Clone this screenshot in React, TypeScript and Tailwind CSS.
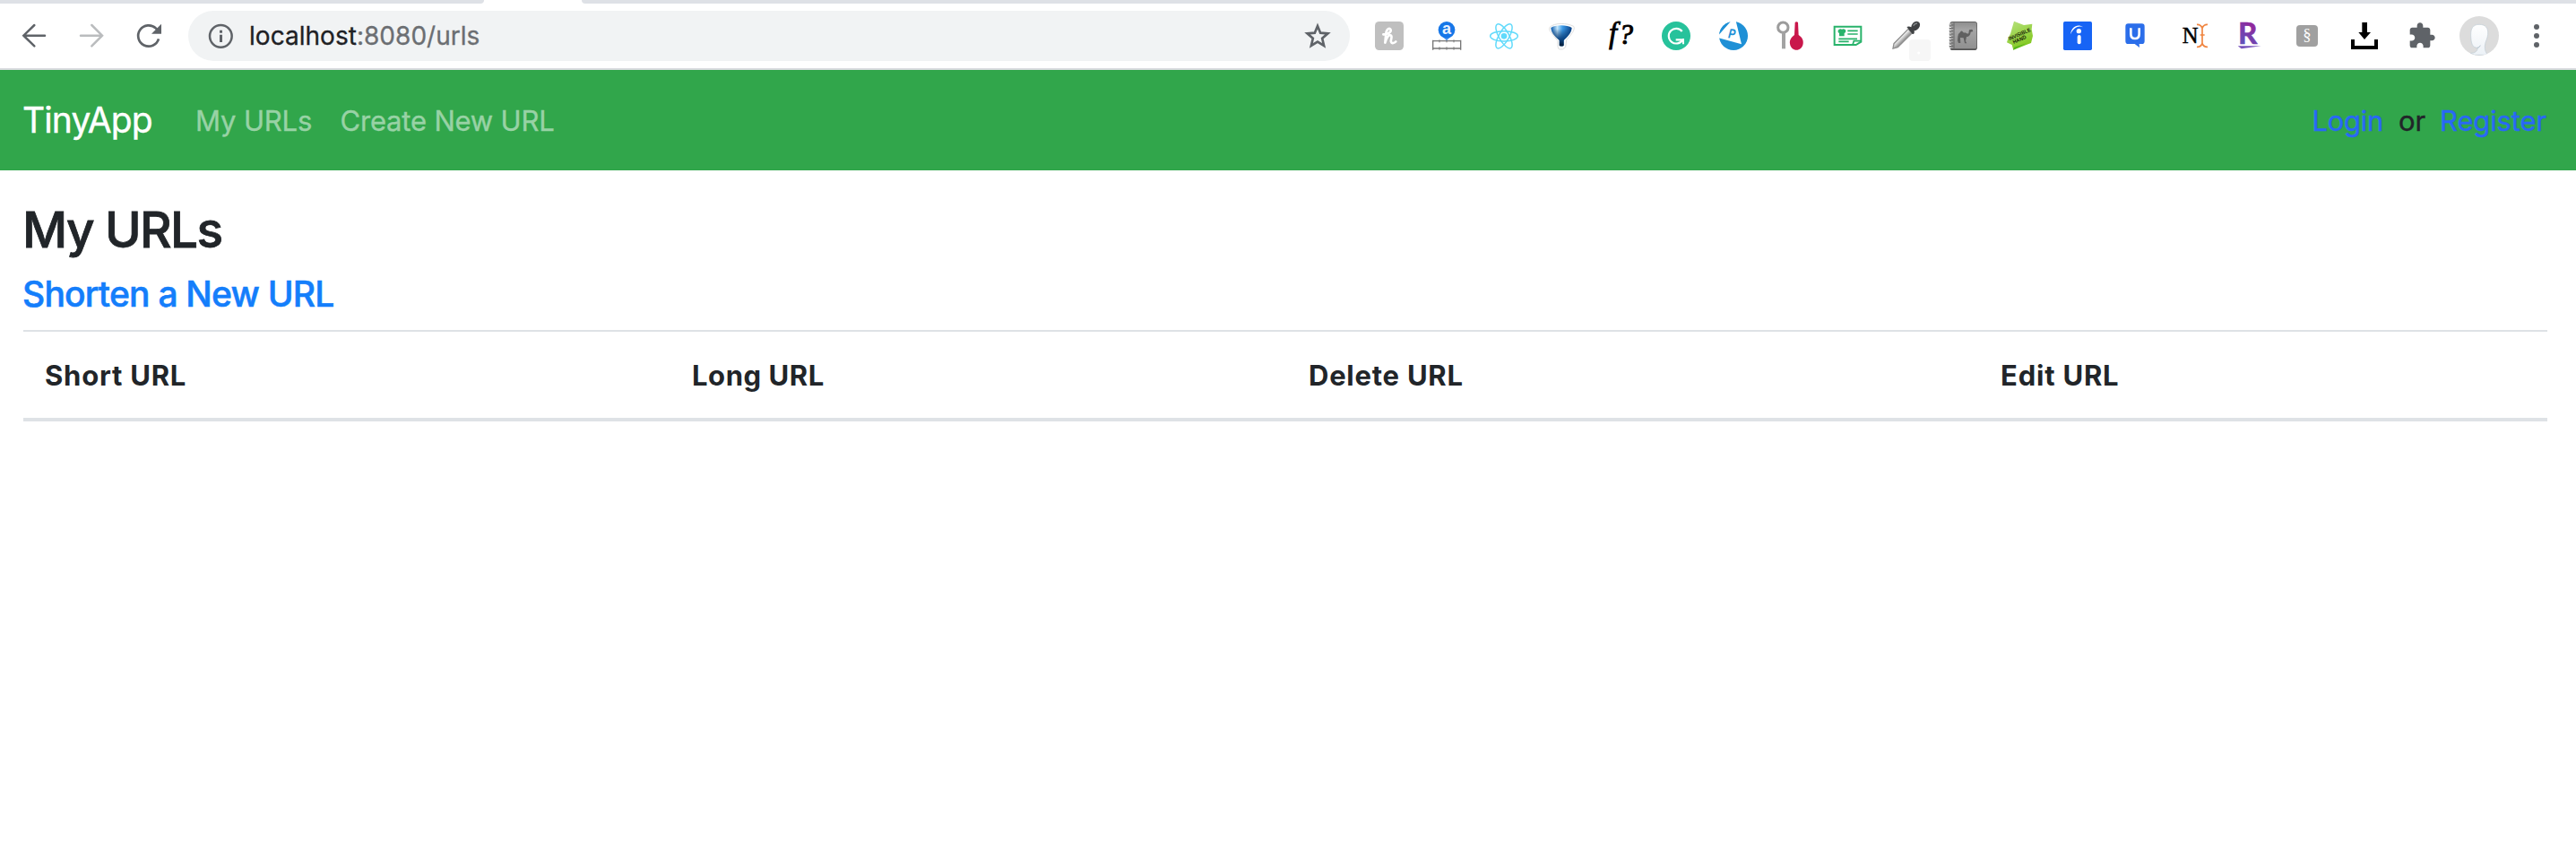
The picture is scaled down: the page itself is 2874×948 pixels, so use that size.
import type { ReactNode } from "react";

function Icon({ label, children }: { label: string; children: ReactNode }) {
  return (
    <svg viewBox="-96 -96 192 192" aria-label={label} role="img" className="h-16 w-16 shrink-0" fill="none">
      {children}
    </svg>
  );
}

function NavigationIcons() {
  return (
    <div className="flex w-[204px] shrink-0 items-center">
      <Icon label="Back">
        <path d="M1 -36 L-35 -1 L1 34 M-35 -1 H36" stroke="#5f6368" strokeWidth="7.5" strokeLinecap="round" />
      </Icon>
      <Icon label="Forward">
        <path d="M1 -36 L36 -1 L1 34 M36 -1 H-36" stroke="#babcbe" strokeWidth="7.5" strokeLinecap="round" />
      </Icon>
      <Icon label="Reload">
        <path d="M33 10 A35 35 0 1 1 24 -25 L29 -20" stroke="#5f6368" strokeWidth="8" />
        <path d="M42 -40 V-7 H9 Z" fill="#5f6368" />
      </Icon>
    </div>
  );
}

function AddressBar() {
  return (
    <div className="flex h-14 w-[1296px] shrink-0 items-center rounded-full bg-[#f1f3f4] pl-1 pr-1">
      <Icon label="Site information">
        <circle cx="1" cy="1" r="37" stroke="#5f6368" strokeWidth="7.5" />
        <path d="M-3 -19 H6 V-10 H-3 Z M-3 -4 H6 V21 H-3 Z" fill="#5f6368" />
      </Icon>
      <span className="flex-1 whitespace-pre text-[28px] leading-[56px] tracking-[0.03px] text-[#6b6e72] [-webkit-text-stroke:0.3px_currentColor]">
        <span className="text-[#202124]">localhost</span>:8080/urls
      </span>
      <Icon label="Bookmark this tab">
        <path
          d="M0 -33 L9.5 -10 L34.5 -8 L15.5 8.5 L21.3 33 L0 20 L-21.3 33 L-15.5 8.5 L-34.5 -8 L-9.5 -10 Z"
          stroke="#5f6368"
          strokeWidth="8"
        />
      </Icon>
    </div>
  );
}

function ExtensionIcons() {
  return (
    <div className="flex items-center pl-3">
      <Icon label="Honey">
        <rect x="-48" y="-48" width="96" height="96" rx="14" fill="#bfbfbf" />
        <path
          d="M-20 -5 C-8 -4 7 -12 5 -20 C2 -29 -10 -23 -11 -8 L-14 23 C-10 6 -1 -5 5 -2 C12 2 3 14 6 20 C9 27 17 24 22 19"
          stroke="#fff"
          strokeWidth="8"
          strokeLinecap="round"
          strokeLinejoin="round"
        />
      </Icon>
      <Icon label="Keyword ruler">
        <path d="M-46 14 V47 M47 14 V47 M-48 17 H48 M-46 42 H47" stroke="#777" strokeWidth="4" />
        <path d="M-24 13 V22 M0 13 V22 M24 13 V22 M-24 37 V47 M0 37 V47 M24 37 V47" stroke="#777" strokeWidth="3" />
        <path d="M-12 4 L0 16 L12 4 Z" fill="#4a96f0" />
        <circle cx="0" cy="-20" r="28" fill="#1677e8" />
        <text x="0" y="-6" textAnchor="middle" fill="#e9f3ff" fontSize="54" fontWeight="700" fontFamily="Liberation Sans, sans-serif">a</text>
      </Icon>
      <Icon label="React developer tools">
        <g stroke="#61dafb" strokeWidth="4.5" transform="translate(0 1)">
          <ellipse rx="46" ry="17" />
          <ellipse rx="46" ry="17" transform="rotate(60)" />
          <ellipse rx="46" ry="17" transform="rotate(120)" />
        </g>
        <circle cx="0" cy="1" r="10" fill="#61dafb" />
      </Icon>
      <Icon label="Filter">
        <defs>
          <linearGradient id="funnel" x1="-34" x2="34" y1="0" y2="0" gradientUnits="userSpaceOnUse">
            <stop offset="0" stopColor="#0c5db0" />
            <stop offset="0.3" stopColor="#c4e6fb" />
            <stop offset="0.55" stopColor="#3d9be8" />
            <stop offset="1" stopColor="#0a4288" />
          </linearGradient>
          <linearGradient id="funnelShade" x1="0" x2="0" y1="-30" y2="34" gradientUnits="userSpaceOnUse">
            <stop offset="0.1" stopColor="#08305f" stopOpacity="0" />
            <stop offset="0.6" stopColor="#08407f" stopOpacity="0.9" />
            <stop offset="1" stopColor="#051a33" />
          </linearGradient>
        </defs>
        <path d="M-38 -30 C-22 -44 18 -44 41 -32 C48 -22 34 -6 17 14 L14 38 Q6 48 -7 45 Q-14 42 -12 17 L-38 -16 Q-43 -24 -38 -30Z" fill="#fff" stroke="#dedede" strokeWidth="3" />
        <path d="M-35 -27 C-22 -38 20 -38 35 -27 C34 -8 16 6 8 15 V32 Q0 37 -7 32 V15 C-16 6 -34 -8 -35 -27Z" fill="url(#funnel)" />
        <path d="M-35 -27 C-22 -38 20 -38 35 -27 C34 -8 16 6 8 15 V32 Q0 37 -7 32 V15 C-16 6 -34 -8 -35 -27Z" fill="url(#funnelShade)" />
      </Icon>
      <Icon label="Font inspector">
        <text x="-33" y="23" fill="#000" stroke="#000" strokeWidth="2.5" fontSize="98" fontStyle="italic" fontFamily="Liberation Serif, serif">f</text>
        <text x="1" y="27" fill="#000" stroke="#000" strokeWidth="3" fontSize="94" fontStyle="italic" fontFamily="Liberation Serif, serif">?</text>
      </Icon>
      <Icon label="Grammarly">
        <circle r="48" fill="#27c29b" />
        <path d="M20 -15 A25 25 0 1 0 22 13 M-1 13 H24" stroke="#fff" strokeWidth="6.5" />
        <path d="M24 9 V28" stroke="#fff" strokeWidth="6" />
      </Icon>
      <Icon label="Price comparison">
        <circle r="48" fill="#1f90d6" />
        <path d="M-8 -50 L8 -50 L27 28 L-50 7 L-50 -2 Z" fill="#fff" />
        <path d="M-12 -46.5 A48 48 0 0 0 -47 -8 Z" fill="#1f90d6" />
        <text x="-18" y="9" fill="#1f90d6" fontSize="45" fontWeight="700" fontStyle="italic" fontFamily="Liberation Sans, sans-serif" textLength="24" lengthAdjust="spacingAndGlyphs" transform="rotate(6)">P</text>
      </Icon>
      <Icon label="Keys">
        <circle cx="-26" cy="-28" r="17" stroke="#9c9c9c" strokeWidth="9" />
        <path d="M-24 -13 V43" stroke="#a3a3a3" strokeWidth="12" />
        <path d="M14 -45 Q19 -50 24 -45 L26 -3 C37 4 43 14 41 26 C37 54 1 54 -3 26 C-5 14 2 4 12 -3 Z" fill="#c9174b" />
      </Icon>
      <Icon label="Recipe card">
        <path d="M-46 -31 H43 V20 L26 30 H-46 Z" stroke="#29b36b" strokeWidth="6" />
        <path d="M-34 -19 Q-26 -26 -21 -22 Q-15 -26 -8 -19 Q-7 -11 -13 -9 V1 H-30 V-9 Q-36 -12 -34 -19Z" fill="#29b36b" />
        <path d="M-2 -17 H32 M-2 -6 H32 M-32 10 H30 M-32 19 H2" stroke="#29b36b" strokeWidth="5" />
        <path d="M15 30 L19 17 L44 17" stroke="#29b36b" strokeWidth="5" />
      </Icon>
      <Icon label="Eye dropper">
        <defs>
          <linearGradient id="glass" x1="-28" y1="0" x2="-10" y2="18" gradientUnits="userSpaceOnUse">
            <stop offset="0" stopColor="#8a8a8a" />
            <stop offset="0.45" stopColor="#fafafa" />
            <stop offset="1" stopColor="#999" />
          </linearGradient>
        </defs>
        <path d="M9 -23 L22 -10 L-26 38 L-42 42 L-39 26 Z" fill="url(#glass)" stroke="#8f8f8f" strokeWidth="4" />
        <path d="M4 -30 Q12 -34 19 -29 Q22 -49 38 -49 Q52 -46 47 -31 Q40 -18 29 -17 Q31 -4 23 -6 Z" fill="#404244" />
        <path d="M26 -34 Q31 -42 39 -42" stroke="#85898b" strokeWidth="5" />
        <rect x="12" y="12" width="72" height="72" rx="11" fill="#f6f6f6" />
        <circle cx="44" cy="57" r="4.5" fill="#fff" />
      </Icon>
      <Icon label="Price tracker">
        <defs>
          <linearGradient id="notebook" x1="0" x2="0" y1="-48" y2="48" gradientUnits="userSpaceOnUse">
            <stop offset="0" stopColor="#8c8c8c" />
            <stop offset="0.3" stopColor="#a5a5a5" />
            <stop offset="1" stopColor="#8e8e8e" />
          </linearGradient>
        </defs>
        <rect x="-44" y="-48" width="92" height="96" rx="10" fill="#555" />
        <rect x="-42" y="-46" width="88" height="89" rx="8" fill="url(#notebook)" />
        <path d="M-30 -44 V44" stroke="#696969" strokeWidth="3" />
        <path d="M-43 -40 V42" stroke="#fff" strokeWidth="8" strokeDasharray="5 5" />
        <path d="M-46 -36 H-32 M-46 -26 H-32 M-46 -16 H-32 M-46 -6 H-32 M-46 4 H-32 M-46 14 H-32 M-46 24 H-32 M-46 34 H-32" stroke="#5f5f5f" strokeWidth="3" />
        <path d="M-18 16 L-17 2 Q-17 -7 -10 -11 Q-5 -21 0 -13 Q4 -9 8 -11 Q14 -6 19 -8 L21 -20 L31 -22 L34 -15 L26 -13 Q25 2 12 3 L9 18 L13 25 H6 L2 7 L-9 6 L-8 24 H-15 Z" fill="#606060" />
      </Icon>
      <Icon label="Invisible Hand">
        <defs>
          <linearGradient id="tag" x1="-30" x2="20" y1="-48" y2="48" gradientUnits="userSpaceOnUse">
            <stop offset="0" stopColor="#b5e07a" />
            <stop offset="1" stopColor="#7cc514" />
          </linearGradient>
        </defs>
        <path d="M-21 -49 L12 -36 L40 -40 L38 -22 L42 0 L36 24 L22 29 L-23 47 L-28 30 L-45 22 L-40 6 L-33 -7 Z" fill="url(#tag)" />
        <path d="M22 25 L-24 47 L-20 38 Z" fill="#52b51d" />
        <g transform="rotate(-24)" fill="#172107" fontFamily="Liberation Sans, sans-serif" fontWeight="700" fontSize="18">
          <text x="-39" y="0" textLength="78" lengthAdjust="spacingAndGlyphs">INVISIBLE</text>
          <text x="-31" y="16" textLength="47" lengthAdjust="spacingAndGlyphs">HAND</text>
        </g>
      </Icon>
      <Icon label="Indeed">
        <rect x="-48" y="-48" width="96" height="96" rx="5" fill="#1764f5" />
        <circle cx="4" cy="-16" r="8" fill="#fff" />
        <path d="M5 3 V22" stroke="#fff" strokeWidth="12" strokeLinecap="round" />
        <path d="M-24 -5 C-21 -32 2 -42 18 -29 C2 -36 -14 -26 -24 -5Z" fill="#fff" />
      </Icon>
      <Icon label="Chat">
        <path d="M-23 -41 H23 Q32 -41 32 -31 V17 Q32 27 23 27 H14 L15 39 L-1 27 H-23 Q-32 27 -32 17 V-31 Q-32 -41 -23 -41Z" fill="#2b6eea" />
        <path d="M-14 -26 V-6 Q-14 9 0 9 Q14 9 14 -6 V-26" stroke="#fff" strokeWidth="8" />
      </Icon>
      <Icon label="Text cursor">
        <text x="-34" y="24" fill="#000" stroke="#000" strokeWidth="1.5" fontSize="74" fontFamily="Liberation Serif, serif">N</text>
        <path d="M16 -38 Q29 -39 34 -26 Q39 -39 52 -38 M34 -27 V27 M16 37 Q29 38 34 25 Q39 38 52 37 M27 -3 H42" transform="translate(-1 0)" stroke="#f08540" strokeWidth="5" />
      </Icon>
      <Icon label="Rakuten">
        <defs>
          <linearGradient id="rakuten" x1="-25" x2="25" y1="20" y2="-40" gradientUnits="userSpaceOnUse">
            <stop offset="0" stopColor="#6350b8" />
            <stop offset="1" stopColor="#982097" />
          </linearGradient>
        </defs>
        <text x="-39" y="26" fill="url(#rakuten)" stroke="url(#rakuten)" strokeWidth="2" fontSize="96" fontWeight="700" fontFamily="Lato, sans-serif" textLength="64" lengthAdjust="spacingAndGlyphs">R</text>
        <path d="M-40 34 H38 L-28 43 Z" fill="#7651bb" />
      </Icon>
      <Icon label="Section">
        <rect x="-36" y="-36" width="72" height="72" rx="12" fill="#a0a0a0" />
        <text x="0" y="15" textAnchor="middle" fill="#fff" fontSize="56" fontFamily="Liberation Serif, serif">§</text>
      </Icon>
      <Icon label="Downloads">
        <path d="M-8 -45 H9 V-12 H21 L0 12 L-20 -12 H-8 Z" fill="#000" />
        <path d="M-39 12 V39 H39 V12" stroke="#000" strokeWidth="12" />
      </Icon>
      <Icon label="Extensions">
        <path
          transform="translate(-48 -48) scale(4)"
          fill="#5f6368"
          d="M20.5 11H19V7c0-1.1-.9-2-2-2h-4V3.5C13 2.12 11.88 1 10.5 1S8 2.12 8 3.5V5H4c-1.1 0-1.99.9-1.99 2v3.8H3.5c1.49 0 2.7 1.21 2.7 2.7s-1.21 2.7-2.7 2.7H2V20c0 1.1.9 2 2 2h3.8v-1.5c0-1.49 1.21-2.7 2.7-2.7 1.49 0 2.7 1.21 2.7 2.7V22H17c1.1 0 2-.9 2-2v-4h1.5c1.38 0 2.5-1.12 2.5-2.5S21.88 11 20.5 11z"
        />
      </Icon>
      <Icon label="Profile">
        <defs>
          <clipPath id="avatar">
            <circle r="66" />
          </clipPath>
          <linearGradient id="face" x1="0" x2="0" y1="-40" y2="60" gradientUnits="userSpaceOnUse">
            <stop offset="0" stopColor="#fff" />
            <stop offset="1" stopColor="#edf2f7" />
          </linearGradient>
        </defs>
        <circle r="66" fill="#dcdcdc" />
        <path clipPath="url(#avatar)" d="M-29 58 C-12 57 -6 51 -5 40 C-23 40 -27 26 -28 0 C-29 -26 -20 -38 0 -38 C20 -38 31 -28 29 -5 C28 10 20 18 19 34 C18 49 23 57 30 64 H-15 Z" fill="url(#face)" stroke="#c0cbd4" strokeWidth="2" />
        <path d="M-6 40 Q0 40 4 32" stroke="#aebdca" strokeWidth="3" />
      </Icon>
      <Icon label="Menu">
        <g fill="#5f6368">
          <circle cy="-30" r="9" />
          <circle r="9" />
          <circle cy="30" r="9" />
        </g>
      </Icon>
    </div>
  );
}

function BrowserChrome() {
  return (
    <header className="h-[78px] border-b-2 border-[#dadce0] bg-white">
      <div className="flex h-1">
        <div className="w-[540px] rounded-br-[4px] bg-[#dee1e6]" />
        <div className="w-[109px]" />
        <div className="flex-1 rounded-bl-[4px] bg-[#dee1e6]" />
      </div>
      <div className="flex h-[72px] items-center pl-[6px]">
        <NavigationIcons />
        <AddressBar />
        <ExtensionIcons />
      </div>
    </header>
  );
}

function Navbar() {
  return (
    <nav className="flex h-28 items-center bg-[#31a64b] pl-[25px] pr-8 text-[31px] leading-[48px] [-webkit-text-stroke:0.4px_currentColor]">
      <a className="w-[193px] text-[39px] tracking-[-0.9px] text-white">TinyApp</a>
      <a className="w-[161.5px] pt-0.5 tracking-[-0.14px] text-[#98d2a5]">My URLs</a>
      <a className="pt-0.5 tracking-[-0.19px] text-[#98d2a5]">Create New URL</a>
      <div className="ml-auto flex pt-0.5 text-[#2868f6]">
        <a className="w-[96.5px] tracking-[-0.28px]">Login</a>
        <span className="w-[46px] text-[#212529]">or</span>
        <a className="w-[120px] tracking-[-0.12px]">Register</a>
      </div>
    </nav>
  );
}

export default function App() {
  return (
    <div className="h-[948px] overflow-hidden bg-white font-['Inter','Liberation_Sans',sans-serif] text-[#212529]">
      <BrowserChrome />
      <Navbar />
      <main className="pl-[26px] pr-8 pt-[33px]">
        <h1 className="-ml-px mb-[15px] text-[55px] font-medium leading-[66px] tracking-[-1.64px] [-webkit-text-stroke:0.8px_currentColor]">My URLs</h1>
        <h2 className="-ml-px mb-4 text-[39px] font-medium leading-[48px] tracking-[-0.78px] text-[#147efb] [-webkit-text-stroke:0.6px_currentColor]">
          <a>Shorten a New URL</a>
        </h2>
        <table className="w-full table-fixed border-collapse text-left text-[31px] leading-[48px]">
          <thead className="border-t-2 border-b-4 border-[#dee2e6]">
            <tr>
              <th className="w-[722px] px-6 pb-[23px] pt-[25px] font-bold tracking-[0.78px]">Short URL</th>
              <th className="w-[688px] px-6 pb-[23px] pt-[25px] font-bold tracking-[0.56px]">Long URL</th>
              <th className="w-[772px] px-6 pb-[23px] pt-[25px] font-bold tracking-[0.76px]">Delete URL</th>
              <th className="px-6 pb-[23px] pt-[25px] font-bold tracking-[0.8px]">Edit URL</th>
            </tr>
          </thead>
        </table>
      </main>
    </div>
  );
}
